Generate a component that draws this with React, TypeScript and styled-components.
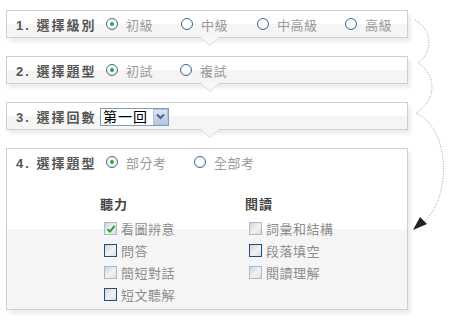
import styled, { createGlobalStyle, css } from 'styled-components';

const GlobalStyle = createGlobalStyle`
  html, body {
    margin: 0;
    padding: 0;
    background: #fff;
  }
  body {
    font-family: "Liberation Sans", "Noto Sans CJK TC", sans-serif;
  }
`;

const Page = styled.div`
  position: relative;
  width: 451px;
  height: 327px;
  box-sizing: border-box;
  padding: 10px 0 0 6px;
  overflow: hidden;
`;

const Panel = styled.div<{ $notch?: boolean; $height: number }>`
  position: relative;
  box-sizing: border-box;
  width: 402px;
  height: ${({ $height }) => $height}px;
  margin-bottom: 18px;
  border: 1px solid #cfcfcf;
  background: linear-gradient(#fff 50%, #f5f5f5 50%);
  box-shadow: 3px 4px 3px rgba(0, 0, 0, 0.07);

  ${({ $notch }) =>
    $notch &&
    css`
      &::before,
      &::after {
        content: '';
        position: absolute;
        left: 193px;
        top: 100%;
        width: 0;
        height: 0;
        border-left: 10px solid transparent;
        border-right: 10px solid transparent;
        border-top: 9px solid #dadada;
      }
      &::after {
        left: 194px;
        border-left-width: 9px;
        border-right-width: 9px;
        border-top: 8px solid #f7f7f7;
      }
    `}
`;

const Row = styled.div`
  display: flex;
  align-items: center;
  height: 26px;
  padding-left: 9px;
`;

const Label = styled.div`
  width: 84px;
  flex-shrink: 0;
  font-size: 13px;
  font-weight: bold;
  letter-spacing: 2px;
  color: #555;
  white-space: nowrap;
`;

const Options = styled.div`
  display: flex;
  align-items: center;
  margin-left: 6px;
`;

const Option = styled.label<{ $w: number }>`
  display: flex;
  align-items: center;
  flex-shrink: 0;
  width: ${({ $w }) => $w}px;
  font-size: 13px;
  letter-spacing: 0.5px;
  color: #9a9a9a;
  white-space: nowrap;
`;

const Radio = styled.span<{ $on?: boolean }>`
  position: relative;
  box-sizing: border-box;
  width: 12px;
  height: 12px;
  margin-right: 8px;
  border-radius: 50%;
  border: 1px solid #3f6891;
  background: radial-gradient(circle at 45% 40%, #fff 45%, #d6e0ea 100%);

  ${({ $on }) =>
    $on &&
    css`
      &::after {
        content: '';
        position: absolute;
        left: 3px;
        top: 3px;
        width: 4px;
        height: 4px;
        border-radius: 50%;
        background: #2ea32e;
      }
    `}
`;

const Select = styled.div`
  display: flex;
  box-sizing: border-box;
  height: 18px;
  margin-top: 1px;
  border: 1px solid #7f9db9;
  background: #fff;
`;

const SelectValue = styled.span`
  width: 50px;
  padding-left: 2px;
  font-size: 14px;
  line-height: 16px;
  color: #000;
  letter-spacing: 1px;
`;

const SelectButton = styled.span`
  display: flex;
  align-items: center;
  justify-content: center;
  box-sizing: border-box;
  width: 15px;
  height: 16px;
  border: 1px solid #b4c3dc;
  background: linear-gradient(#dbe5f5, #b5c6e2);
`;

const Columns = styled.div`
  display: flex;
  padding: 21px 0 0 93px;
`;

const Column = styled.div`
  width: 145px;
`;

const ColumnTitle = styled.div`
  font-size: 13px;
  font-weight: bold;
  letter-spacing: 1px;
  line-height: 18px;
  color: #444;
  margin-bottom: 3px;
`;

const CheckRow = styled.div`
  display: flex;
  align-items: center;
  height: 22px;
  padding-left: 4px;
  font-size: 13px;
  letter-spacing: 0.5px;
  color: #8c8c8c;
`;

const Check = styled.span<{ $light?: boolean }>`
  position: relative;
  box-sizing: border-box;
  width: 13px;
  height: 13px;
  margin-right: 4px;
  border: 1px solid ${({ $light }) => ($light ? '#a7bad0' : '#1f4f7e')};
  background: linear-gradient(135deg, #d2d2d2 0%, #f2f2f2 55%, #dcdcdc 100%);

  svg {
    position: absolute;
    left: 1px;
    top: 1px;
  }
`;

const Curve = styled.svg`
  position: absolute;
  left: 0;
  top: 0;
  pointer-events: none;
`;

const levels = [
  { name: '初級', w: 75 },
  { name: '中級', w: 76 },
  { name: '中高級', w: 88 },
  { name: '高級', w: 60 },
];
const tests = [
  { name: '初試', w: 74 },
  { name: '複試', w: 60 },
];
const scopes = [
  { name: '部分考', w: 88 },
  { name: '全部考', w: 70 },
];

const listening = [
  { name: '看圖辨意', checked: true, light: true },
  { name: '問答' },
  { name: '簡短對話', light: true },
  { name: '短文聽解' },
];

const reading = [
  { name: '詞彙和結構', light: true },
  { name: '段落填空' },
  { name: '閱讀理解', light: true },
];

type Item = { name: string; checked?: boolean; light?: boolean };
type Choice = { name: string; w: number };

function RadioGroup({ items }: { items: Choice[] }) {
  return (
    <Options>
      {items.map((c, i) => (
        <Option key={c.name} $w={c.w}>
          <Radio $on={i === 0} />
          {c.name}
        </Option>
      ))}
    </Options>
  );
}

function CheckList({ title, items }: { title: string; items: Item[] }) {
  return (
    <Column>
      <ColumnTitle>{title}</ColumnTitle>
      {items.map((item) => (
        <CheckRow key={item.name}>
          <Check $light={item.light}>
            {item.checked && (
              <svg width="10" height="10" viewBox="0 0 10 10">
                <path d="M1.5 5.2 L4 7.6 L8.6 1.8" fill="none" stroke="#27a12a" strokeWidth="2" />
              </svg>
            )}
          </Check>
          {item.name}
        </CheckRow>
      ))}
    </Column>
  );
}

export default function App() {
  return (
    <>
      <GlobalStyle />
      <Page>
        <Panel $notch $height={28}>
          <Row>
            <Label>1. 選擇級別</Label>
            <RadioGroup items={levels} />
          </Row>
        </Panel>

        <Panel $notch $height={28}>
          <Row>
            <Label>2. 選擇題型</Label>
            <RadioGroup items={tests} />
          </Row>
        </Panel>

        <Panel $notch $height={28}>
          <Row>
            <Label>3. 選擇回數</Label>
            <Select>
              <SelectValue>第一回</SelectValue>
              <SelectButton>
                <svg width="9" height="7" viewBox="0 0 9 7">
                  <path d="M1 1.5 L4.5 5 L8 1.5" fill="none" stroke="#4d6185" strokeWidth="2" />
                </svg>
              </SelectButton>
            </Select>
          </Row>
        </Panel>

        <Panel $height={162}>
          <Row>
            <Label>4. 選擇題型</Label>
            <RadioGroup items={scopes} />
          </Row>
          <Columns>
            <CheckList title="聽力" items={listening} />
            <CheckList title="閱讀" items={reading} />
          </Columns>
        </Panel>

        <Curve width="451" height="327" viewBox="0 0 451 327">
          <path
            d="M415 20 C433 30 433 52 418 63 C437 75 437 100 416 113 C453 130 452 208 417 226"
            fill="none"
            stroke="#a0a0a0"
            strokeWidth="1"
            strokeDasharray="1 1.5"
          />
          <polygon points="413,230 420,217 427,224" fill="#222" />
        </Curve>
      </Page>
    </>
  );
}
